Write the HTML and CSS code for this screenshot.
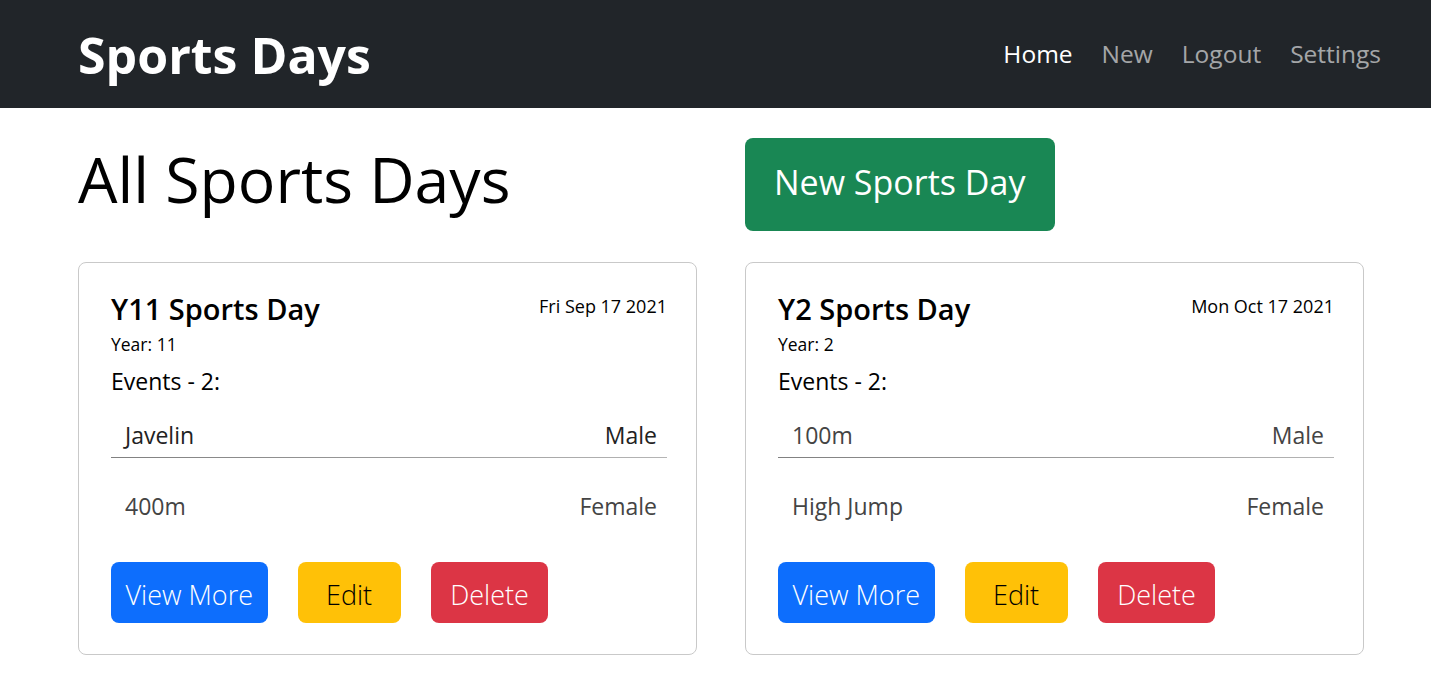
FILE: index.html
```html
<!DOCTYPE html>
<html lang="en">
<head>
<meta charset="utf-8">
<title>Sports Days</title>
<link rel="stylesheet" href="styles.css">
</head>
<body>
<nav class="navbar">
  <a class="brand" href="#">Sports Days</a>
  <ul class="nav">
    <li><a class="nav-link active" href="#">Home</a></li>
    <li><a class="nav-link" href="#">New</a></li>
    <li><a class="nav-link" href="#">Logout</a></li>
    <li><a class="nav-link" href="#">Settings</a></li>
  </ul>
</nav>
<main class="main">
  <div class="grid header-row">
    <h1 class="page-title">All Sports Days</h1>
    <div><a class="btn btn-new" href="#">New Sports Day</a></div>
  </div>
  <div class="grid cards">
    <section class="card">
      <div class="card-head">
        <h2 class="card-title">Y11 Sports Day</h2>
        <span class="card-date">Fri Sep 17 2021</span>
      </div>
      <div class="card-year">Year: 11</div>
      <div class="card-events">Events - 2:</div>
      <ul class="events">
        <li class="event event-first event-dark"><span>Javelin</span><span>Male</span></li>
        <li class="event event-second"><span>400m</span><span>Female</span></li>
      </ul>
      <div class="actions">
        <a class="btn btn-sm btn-view" href="#">View More</a>
        <a class="btn btn-sm btn-edit" href="#">Edit</a>
        <a class="btn btn-sm btn-delete" href="#">Delete</a>
      </div>
    </section>
    <section class="card">
      <div class="card-head">
        <h2 class="card-title">Y2 Sports Day</h2>
        <span class="card-date">Mon Oct 17 2021</span>
      </div>
      <div class="card-year">Year: 2</div>
      <div class="card-events">Events - 2:</div>
      <ul class="events">
        <li class="event event-first"><span>100m</span><span>Male</span></li>
        <li class="event event-second"><span>High Jump</span><span>Female</span></li>
      </ul>
      <div class="actions">
        <a class="btn btn-sm btn-view" href="#">View More</a>
        <a class="btn btn-sm btn-edit" href="#">Edit</a>
        <a class="btn btn-sm btn-delete" href="#">Delete</a>
      </div>
    </section>
  </div>
</main>
</body>
</html>
```

FILE: styles.css
```css
* { box-sizing: border-box; }
html, body { margin: 0; padding: 0; }
body {
  font-family: "Open Sans", "Noto Sans", "DejaVu Sans", sans-serif;
  color: #000;
  background: #fff;
}
a { text-decoration: none; }

.navbar {
  height: 108px;
  background: #212529;
  display: flex;
  align-items: center;
  justify-content: space-between;
  padding: 0 36px 0 78px;
}
.brand {
  color: #fff;
  font-weight: 700;
  font-size: 50px;
  line-height: 60px;
  margin-top: 2px;
}
.nav {
  list-style: none;
  margin: 0;
  padding: 0;
  display: flex;
}
.nav-link {
  display: block;
  padding: 0 14.5px;
  font-size: 24.5px;
  line-height: 36px;
  color: rgba(255,255,255,0.6);
}
.nav li:last-child .nav-link { padding-right: 14px; }
.nav-link.active { color: #fff; }

.main { padding: 0 0 0 78px; }
.grid {
  display: grid;
  grid-template-columns: 619px 619px;
  column-gap: 48px;
}
.header-row {
  padding-top: 30px;
  align-items: start;
}
.page-title {
  margin: 5px 0 0;
  font-size: 62.5px;
  font-weight: 500;
  line-height: 72px;
}
.btn {
  display: inline-block;
  border-radius: 8px;
  color: #fff;
}
.btn-new {
  background: #198754;
  font-size: 34px;
  line-height: 51px;
  padding: 19px 30px 23px 29px;
}
.cards { margin-top: 31px; }
.card {
  border: 1px solid #c9c9c9;
  border-radius: 8px;
  padding: 29px 29px 31px 32px;
}
.card-head {
  display: flex;
  justify-content: space-between;
  align-items: flex-start;
}
.card-title {
  margin: 0;
  font-size: 29px;
  font-weight: 600;
  line-height: 33.6px;
}
.card-date {
  margin-top: 2px;
  font-size: 18px;
  line-height: 25.5px;
}
.card-year {
  margin-top: 6px;
  font-size: 17.5px;
  line-height: 24px;
}
.card-events {
  margin-top: 9px;
  font-size: 23px;
  line-height: 33px;
}
.events {
  list-style: none;
  margin: 21px 0 0;
  padding: 0;
}
.event {
  display: flex;
  justify-content: space-between;
  font-size: 23px;
  line-height: 33px;
  color: #444;
  padding: 0 10px 0 14px;
}
.event-dark { color: #222; }
.event-first {
  padding-bottom: 5px;
  border-bottom: 1px solid transparent;
  border-image: linear-gradient(to right, #808080, #b5b5b5) 1;
}
.event-second { padding-top: 32px; }
.actions {
  margin-top: 39px;
  display: flex;
  gap: 30px;
}
.btn-sm {
  font-size: 27px;
  font-weight: 300;
  line-height: 41px;
  padding-top: 12px;
  padding-bottom: 8px;
}
.btn-view { background: #0d6efd; padding-left: 14.5px; padding-right: 14.5px; }
.btn-edit { background: #ffc107; color: #000; padding-left: 28.5px; padding-right: 28.5px; }
.btn-delete { background: #dc3545; padding-left: 19.5px; padding-right: 19.5px; }
```
